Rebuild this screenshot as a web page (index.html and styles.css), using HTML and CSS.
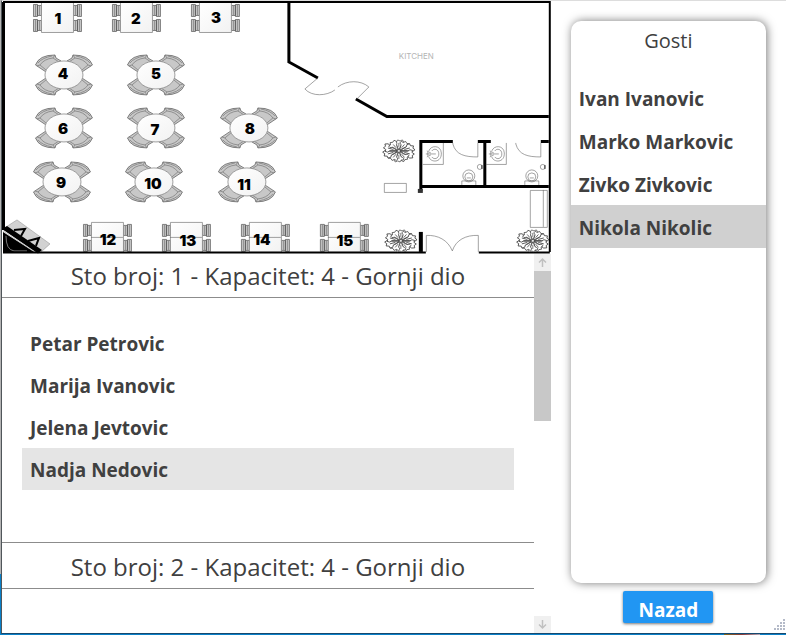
FILE: index.html
```html
<!DOCTYPE html>
<html lang="sr-Latn">
<head>
<meta charset="utf-8">
<meta name="viewport" content="width=device-width, initial-scale=1">
<title>Raspored gostiju</title>
<link rel="stylesheet" href="styles.css">
</head>
<body>
<div class="window">
  <main class="seating">
    <svg class="plan" viewBox="2 1 549 253" role="img" aria-label="Plan sale">
      <defs>
        <linearGradient id="top" x1="0" y1="0" x2="1" y2="1"><stop offset="0" stop-color="#fff"/><stop offset="1" stop-color="#f2f2f2"/></linearGradient>
        <g id="seat">
          <path class="chair" d="M-28.500-10Q-25-20-9-20L-8-17L-3-14L-18-3L-24-7Z"/>
          <path class="chair-line" d="M-27-9L-24-10Q-20-16-11-17L-9-20M-24-10L-18-5M-11-17L-5-13M-26-12Q-22-17-12-19"/>
        </g>
        <g id="round">
          <use href="#seat"/><use href="#seat" transform="scale(-1 1)"/>
          <use href="#seat" transform="scale(1 -1)"/><use href="#seat" transform="scale(-1 -1)"/>
          <ellipse class="top" rx="19" ry="14"/>
        </g>
        <g id="chair">
          <path class="chair" d="M.5.5H4.500V12.500H.5ZM4.500 1.500H8.500V11.500H4.500Z"/>
          <path class="chair-line" d="M2.500 1V12M6.500 2V11"/>
        </g>
        <g id="square">
          <use href="#chair" y="2"/><use href="#chair" y="17"/>
          <use href="#chair" transform="translate(49 2) scale(-1 1)"/><use href="#chair" transform="translate(49 17) scale(-1 1)"/>
          <path class="top" d="M8.500.5H40.500V30.500H8.500Z"/>
        </g>
        <path id="petal" d="M0-1L-2-6L-4-7L-4-9L-2-9L-1-11L1-10L3-11L4-9L3-7L2-6L0-1M0-4V-8"/>
        <g id="plant" class="leaf">
          <use href="#petal"/><use href="#petal" transform="rotate(36)"/><use href="#petal" transform="rotate(72) scale(1 1.200)"/>
          <use href="#petal" transform="rotate(108) scale(1 1.200)"/><use href="#petal" transform="rotate(144)"/><use href="#petal" transform="rotate(180)"/>
          <use href="#petal" transform="rotate(216)"/><use href="#petal" transform="rotate(252) scale(1 1.200)"/><use href="#petal" transform="rotate(288) scale(1 1.200)"/><use href="#petal" transform="rotate(324)"/>
        </g>
        <g id="bath" class="thin">
          <path d="M0 21.500H20.500V0M4 8L8 10M3 11H13M4 14L8 12M5 9V13"/>
          <path d="M6 8C8 2 18 2 18.500 10C19 20 8 20 6 14M9 8C11 5 16 6 16 11C16 16 11 17 9 14"/>
          <circle cx="46" cy="33" r="6"/><circle cx="46" cy="34" r="4"/><path d="M44 35H48M39 42V38H53V42"/>
          <path d="M30 0V1C33 12 42 14 55 14V0"/><circle cx="57" cy="24" r="2.500"/><path stroke-width="1.500" d="M59 22V26"/>
        </g>
      </defs>

      <use href="#square" x="33" y="2"/><use href="#square" x="112" y="2"/><use href="#square" x="191" y="2"/>
      <use href="#round" x="64" y="75"/><use href="#round" x="156" y="75"/>
      <use href="#round" x="64" y="128"/><use href="#round" x="156" y="128"/><use href="#round" x="249" y="128"/>
      <use href="#round" x="62" y="182"/><use href="#round" x="154" y="182"/><use href="#round" x="247" y="182"/>
      <use href="#square" x="83" y="222"/><use href="#square" x="162" y="222"/><use href="#square" x="241" y="222"/><use href="#square" x="320" y="222"/>
      <path class="thin" d="M91 237.500H123M170 237.500H202M249 237.500H281M328 237.500H360"/>

      <g class="numbers">
        <text x="58" y="24">1</text><text x="136" y="24">2</text><text x="216" y="23">3</text>
        <text x="63" y="79">4</text><text x="156" y="79">5</text>
        <text x="63" y="134">6</text><text x="155" y="135">7</text><text x="250" y="134">8</text>
        <text x="61" y="188">9</text><text x="153" y="189">10</text><text x="244" y="190">11</text>
        <text x="108" y="245">12</text><text x="188" y="246">13</text><text x="262" y="245">14</text><text x="345" y="246">15</text>
      </g>

      <path fill="#d2d2d2" stroke="#888" stroke-width=".5" d="M17 220L50 244L40 253L3 229Z"/>
      <path d="M2 229L7 226L42 250L38 253.500Z"/><path d="M3 232L36 253H3Z"/>
      <path fill="none" stroke="#aaa" stroke-width=".7" d="M3 231L36 253M6 236Q6 250 14 251H27"/>
      <path fill="none" stroke="#000" stroke-width="2" d="M14 230L25 229L21 236M28 241L39 238L36 246"/>

      <g class="walls">
        <path stroke-width="2" d="M3 2H550V252M479 252.500H550M3 252.500H426"/>
        <path stroke-width="3" d="M3.500 2V230M289 2V62L318 78M356 99L387 116.500H549"/>
        <path stroke-width="3" d="M421 191V141.500H453M478 141.500H491M541 141.500H549M485 142V187M421 186.500H549"/>
        <path stroke-width="4" d="M421 232V252"/>
      </g>
      <rect x="418" y="189" width="5" height="4" fill="#333"/>
      <path class="thin" d="M318 78L305 89C312 97 327 96 335 90M338 87C347 80 361 80 369 87L357 99"/>
      <text class="room" x="399" y="59">KITCHEN</text>
      <use href="#bath" x="423" y="143"/><use href="#bath" x="486" y="143"/>
      <use href="#plant" transform="translate(399 151) scale(1.200 1)"/>
      <use href="#plant" transform="translate(401 241) scale(1.200 1)"/>
      <use href="#plant" transform="translate(533 241) scale(1.200 1)"/>
      <path class="thin" d="M384.500 183.500H406.500V192.500H384.500ZM530.500 190.500H547.500V227.500H530.500ZM543.500 190V227M426.500 252V235.500C438 235 448 240 452.500 251C456 240 466 235 478.500 235.500V252"/>
    </svg>

    <div class="tables">
      <div class="table-list">
        <section class="table">
          <h2>Sto broj: 1 - Kapacitet: 4 - Gornji dio</h2>
          <ul class="people">
            <li><button type="button">Petar Petrovic</button></li>
            <li><button type="button">Marija Ivanovic</button></li>
            <li><button type="button">Jelena Jevtovic</button></li>
            <li><button type="button" class="hovered">Nadja Nedovic</button></li>
          </ul>
        </section>
        <section class="table">
          <h2>Sto broj: 2 - Kapacitet: 4 - Gornji dio</h2>
          <ul class="people"></ul>
        </section>
      </div>
      <div class="scrollbar">
        <button type="button" aria-label="Gore"><svg viewBox="0 0 17 17"><path d="M8.500 13V5M5 8.500L8.500 5L12 8.500"/></svg></button>
        <div class="track"><div class="thumb"></div></div>
        <button type="button" aria-label="Dolje"><svg viewBox="0 0 17 17"><path d="M8.500 4V12M5 8.500L8.500 12L12 8.500"/></svg></button>
      </div>
    </div>
  </main>

  <aside class="side">
    <section class="guests">
      <h1>Gosti</h1>
      <ul class="people">
        <li><button type="button">Ivan Ivanovic</button></li>
        <li><button type="button">Marko Markovic</button></li>
        <li><button type="button">Zivko Zivkovic</button></li>
        <li><button type="button" class="selected">Nikola Nikolic</button></li>
      </ul>
    </section>
    <button type="button" class="back">Nazad</button>
    <svg class="grip" viewBox="0 0 12 12" aria-hidden="true"><path d="M9 0h2v2h-2zM6 3h2v2h-2zM9 3h2v2h-2zM3 6h2v2h-2zM6 6h2v2h-2zM9 6h2v2h-2zM0 9h2v2h-2zM3 9h2v2h-2zM6 9h2v2h-2zM9 9h2v2h-2z"/></svg>
  </aside>
</div>
</body>
</html>
```
FILE: styles.css
```css
* {
  box-sizing: border-box;
}

body {
  margin: 0;
  height: 100vh;
  padding: 0 0 1px 1px;
  background:
    linear-gradient(90deg, #7a6a20, #8a3a3a, #b0a8b8) right 26px bottom / 36px 1px no-repeat,
    linear-gradient(#b4b4b4 574px, #0a80c8 574px);
  color: #404040;
  font-family: "Open Sans", "Noto Sans", sans-serif;
}

button {
  border: 0;
  padding: 0;
  background: none;
  color: inherit;
  font: inherit;
}

h1,
h2,
ul {
  margin: 0;
  padding: 0;
  font-weight: 400;
  list-style: none;
}

.window {
  display: grid;
  grid-template-columns: 7fr 3fr;
  height: 100%;
  border: solid #50565a;
  border-width: 1px 0 1px 1px;
  border-top-color: #ddd;
  border-bottom-color: #16496f;
  background: #fff;
}

.seating {
  display: flex;
  flex-direction: column;
  min-width: 0;
  min-height: 0;
}

.plan {
  display: block;
  width: 100%;
}

.chair {
  fill: #c8c8c8;
  stroke: #555;
  stroke-width: 0.7;
}

.chair-line {
  fill: none;
  stroke: #777;
  stroke-width: 0.7;
}

.top {
  fill: url(#top);
  stroke: #888;
  stroke-width: 0.8;
}

.thin {
  fill: none;
  stroke: #666;
  stroke-width: 0.6;
}

.leaf {
  fill: #fff;
  stroke: #333;
  stroke-width: 0.6;
}

.walls {
  fill: none;
  stroke: #000;
}

.numbers {
  fill: #000;
  font: 900 15px Inter, sans-serif;
  text-anchor: middle;
}

.room {
  fill: #b4b4b4;
  font: 8px Inter, sans-serif;
}

.tables {
  display: flex;
  flex: 1;
  min-height: 0;
}

.table-list {
  flex: 1;
  overflow: hidden;
}

.table h2 {
  height: 44px;
  border-bottom: 1px solid #8c8c8c;
  font-size: 24px;
  line-height: 44px;
  text-align: center;
}

.table + .table h2 {
  height: 47px;
  border-top: 1px solid #8c8c8c;
  line-height: 48px;
}

.table .people {
  padding: 24px 20px 52px;
}

.people button {
  display: block;
  width: 100%;
  height: 42px;
  padding: 0 8px;
  font-size: 19px;
  font-weight: 700;
  line-height: 44px;
  text-align: left;
}

.people .hovered {
  background: #e5e5e5;
}

.people .selected {
  background: #d0d0d0;
}

.scrollbar {
  display: flex;
  flex-direction: column;
  width: 17px;
}

.scrollbar button {
  height: 17px;
  background: #f0f0f0;
}

.scrollbar svg {
  display: block;
  fill: none;
  stroke: #c0c0c0;
  stroke-width: 1.5;
}

.track {
  flex: 1;
}

.thumb {
  height: 150px;
  background: #c8c8c8;
}

.side {
  position: relative;
  display: flex;
  flex-direction: column;
  align-items: center;
  padding: 20px 20px 10px;
}

.guests {
  flex: 1;
  width: 100%;
  border-radius: 10px;
  background: #fff;
  box-shadow: 1px 0 10px #0008;
}

.guests h1 {
  padding-bottom: 15px;
  font-size: 20px;
  line-height: 40px;
  text-align: center;
}

.guests .people button {
  height: 43px;
  line-height: 47px;
}

.back {
  width: 90px;
  height: 32px;
  margin-top: 8px;
  border-radius: 2px;
  background: #2196f3;
  box-shadow: 0 1px 3px #0008;
  color: #fff;
  font-size: 19px;
  font-weight: 700;
  line-height: 38px;
}

.back,
.people button {
  cursor: pointer;
}

.grip {
  position: absolute;
  right: 0;
  bottom: 2px;
  width: 12px;
  fill: #b4bac8;
}
```
